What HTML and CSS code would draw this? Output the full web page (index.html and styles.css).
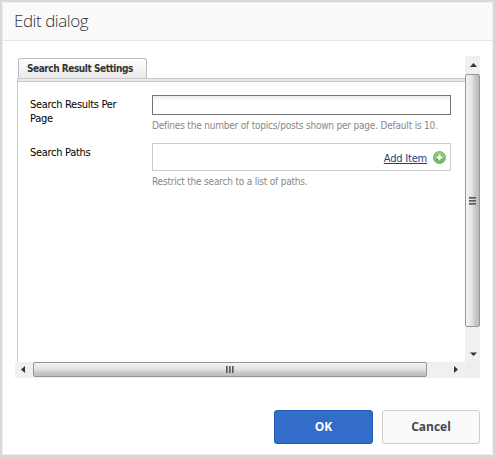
FILE: index.html
```html
<!DOCTYPE html>
<html lang="en">
<head>
<meta charset="utf-8">
<title>Edit dialog</title>
<link rel="stylesheet" href="styles.css">
</head>
<body>
<div class="dialog">
  <header class="header"><h1>Edit dialog</h1></header>
  <main class="viewport">
    <section class="panel">
      <div class="tabs"><div class="tab"><span>Search Result Settings</span></div></div>
      <div class="strip"></div>
      <form class="form">
        <label class="label" for="count"><span>Search Results Per</span><br>Page</label>
        <div class="field">
          <input class="input" id="count" type="text">
          <p class="help"><span class="help-count">Defines the number of topics/posts shown per page. Default is 10.</span></p>
        </div>
        <div class="label">Search Paths</div>
        <div class="field">
          <div class="paths">
            <a class="add" href="#">Add Item</a>
            <svg class="plus" width="13" height="13" viewBox="0 0 13 13">
              <defs><linearGradient id="g" x1="0" y1="0" x2="0" y2="1"><stop offset="0" stop-color="#8cc878"/><stop offset="1" stop-color="#4a9c38"/></linearGradient></defs>
              <circle cx="6.5" cy="6.5" r="6" fill="url(#g)" stroke="#5fa94d" stroke-width=".8"/>
              <circle cx="6.5" cy="6.5" r="4.7" fill="none" stroke="#b3dda6" stroke-width=".8"/>
              <path d="M6.5 3.5v6M3.5 6.5h6" stroke="#fff" stroke-width="2"/>
            </svg>
          </div>
          <p class="help"><span class="help-paths">Restrict the search to a list of paths.</span></p>
        </div>
      </form>
    </section>
    <div class="vbar">
      <svg class="up" width="15" height="18" viewBox="0 0 15 18"><path d="M8.5 7l3.5 4H5z" fill="#333"/></svg>
      <div class="vthumb"><i></i><i></i><i></i></div>
      <svg class="down" width="15" height="35" viewBox="0 0 15 35"><path d="M5 25.500h7L8.500 29z" fill="#333"/></svg>
    </div>
    <div class="hbar">
      <svg width="18" height="16" viewBox="0 0 18 16"><path d="M6 7.500L10 4v7z" fill="#333"/></svg>
      <div class="hthumb"><i></i><i></i><i></i></div>
      <svg class="right" width="37" height="16" viewBox="0 0 37 16"><path d="M27 4l4 3.500-4 3.500z" fill="#333"/></svg>
    </div>
    <div class="corner"></div>
  </main>
  <footer class="footer">
    <button class="btn ok"><span>OK</span></button>
    <button class="btn cancel"><span>Cancel</span></button>
  </footer>
</div>
</body>
</html>
```
FILE: styles.css
```css
* { box-sizing: border-box; }
body { margin: 0; background: #fff; overflow: hidden; }
.dialog {
  width: 495px; height: 457px;
  border: 2px solid #d9d9d9;
  box-shadow: inset 0 0 0 1px #ededed;
  font-family: "DejaVu Sans Condensed", "DejaVu Sans", sans-serif;
  font-stretch: condensed;
  font-size: 11px; color: #000;
}
.header {
  margin: 0 1px; height: 39px;
  background: #fafafa; border-bottom: 1px solid #e4e4e4;
  border-top: 1px solid #ededed;
  padding: 6px 0 0 11px;
}
h1 { margin: 0; font: 300 17px/24px "Open Sans", sans-serif; letter-spacing: -.45px; color: #333; }
.viewport {
  margin: 15px 0 0 13px; width: 465px; height: 322px;
  display: grid; grid-template: 306px 16px / 450px 15px;
}
.panel { padding-left: 2px; }
.tabs { height: 22px; padding: 2px 0 0 1px; }
.tab {
  width: 129px; height: 20px;
  border: 1px solid #bbb; border-bottom: 0; border-radius: 3px 3px 0 0;
  background: linear-gradient(#fff, #e9e9e9);
  font: 700 10px/19px "DejaVu Sans Condensed", "DejaVu Sans", sans-serif;
  color: #333; padding-left: 8px; white-space: nowrap;
  letter-spacing: -.45px;
}
.strip { height: 4px; border: 1px solid #c8c8c8; border-right: 0; background: #ebebeb; }
.form {
  height: 280px; border-left: 1px solid #c8c8c8;
  padding: 13px 0 0 12px;
  display: grid; grid-template: 48px 50px / 122px 299px;
}
.label { line-height: 14px; padding-top: 3px; letter-spacing: -.3px; white-space: nowrap; }
.input {
  display: block; width: 299px; height: 20px; padding: 0;
  border: 1px solid #747474; border-radius: 0; outline: 0;
  background: linear-gradient(#e9eeee, #fff 5px);
}
.help { margin: 4px 0 0; font-size: 10px; line-height: 13px; color: #888; white-space: nowrap; letter-spacing: -.2px; }
.paths {
  height: 28px; border: 1px solid #ccc;
  display: flex; justify-content: flex-end; align-items: center; padding-right: 4px; gap: 6px;
}
.add { color: #15428b; text-decoration: underline; letter-spacing: -.2px; padding-top: 2px; }
.plus { display: block; }
.vbar { background: #f0f0f0; display: flex; flex-direction: column; }
.vbar svg, .hbar svg { display: block; flex: none; }
.vthumb {
  height: 253px; border: 1px solid #969696; border-radius: 2px;
  background: linear-gradient(90deg, #f4f4f4, #e3e3e5 45%, #c5c5c9 75%, #bbb);
  display: flex; flex-direction: column; align-items: center; justify-content: center; gap: 1px;
}
.vthumb i { width: 7px; height: 2px; background: linear-gradient(#444, #999); }
.hbar { background: #f0f0f0; display: flex; }
.hthumb {
  width: 394px; height: 15px; border: 1px solid #969696; border-radius: 2px;
  background: linear-gradient(#f4f4f4, #e3e3e3 45%, #c8c8c8 75%, #bcbcbc);
  display: flex; align-items: center; justify-content: center; gap: 1px;
}
.hthumb i { width: 2px; height: 7px; background: linear-gradient(90deg, #444, #999); }
.corner { background: #eee; }
.footer { display: flex; justify-content: flex-end; gap: 9px; padding: 32px 13px 0 0; }
.btn {
  height: 34px; padding: 0; border-radius: 3px;
  font: 700 12px/18px "Open Sans", sans-serif;
}
.ok { width: 99px; background: #326dc9; border: 1px solid #1f5cb9; color: #fff; }
.cancel { width: 98px; background: #fafafa; border: 1px solid #cdcdcd; color: #484848; }
```
